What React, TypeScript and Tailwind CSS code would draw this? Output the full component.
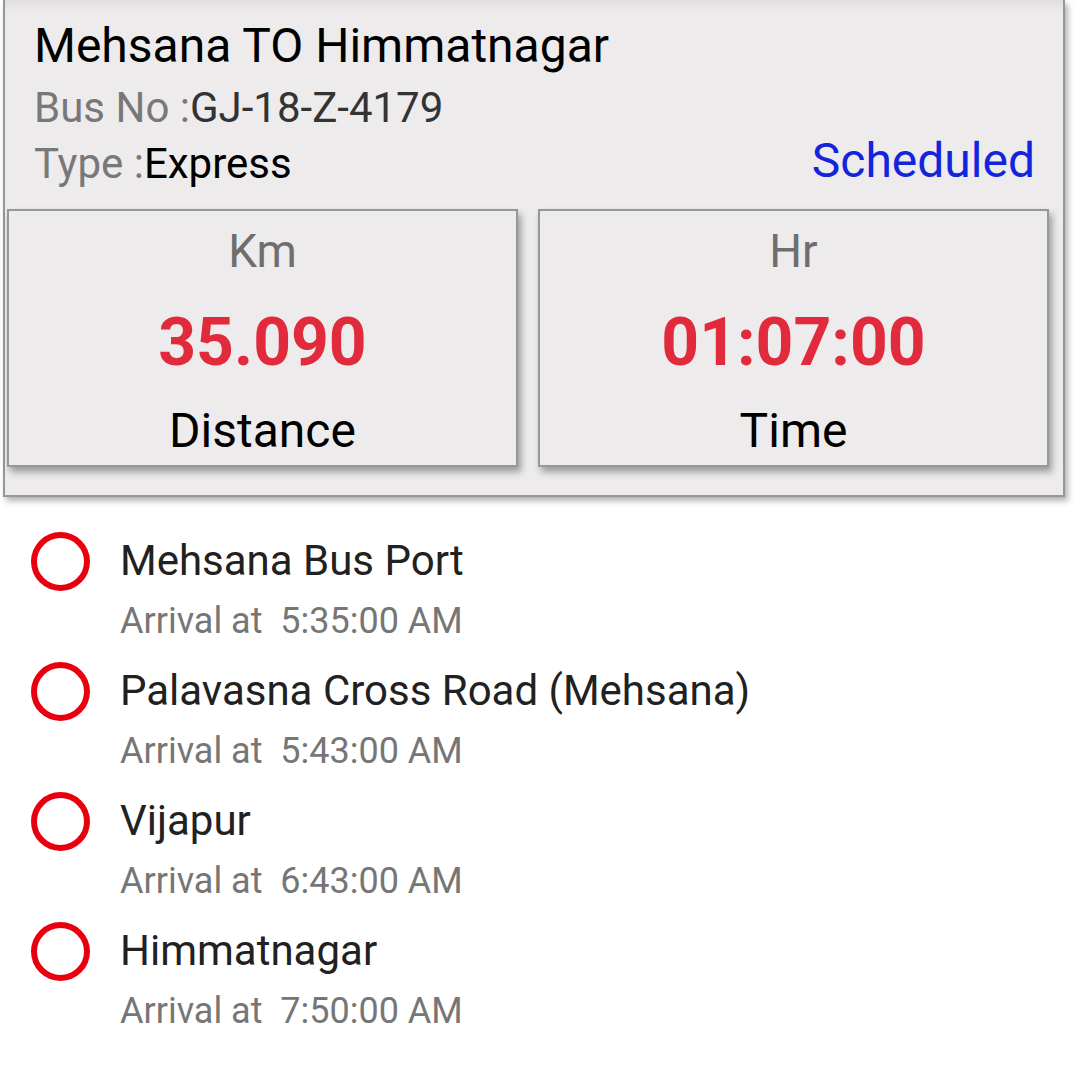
import React from "react";

const stops = [
  { name: "Mehsana Bus Port", time: "5:35:00 AM" },
  { name: "Palavasna Cross Road (Mehsana)", time: "5:43:00 AM" },
  { name: "Vijapur", time: "6:43:00 AM" },
  { name: "Himmatnagar", time: "7:50:00 AM" },
];

function StatBox({ unit, value, label }: { unit: string; value: string; label: string }) {
  return (
    <div className="w-[511px] h-[258px] box-border border-2 border-[#979797] bg-[#edebec] shadow-[3px_5px_7px_rgba(0,0,0,0.35)] flex flex-col items-center">
      <div className="mt-[12px] text-[46px] leading-[56px] text-[#6e6e6e]">{unit}</div>
      <div className="mt-[25px] text-[66px] leading-[78px] font-bold text-[#e12a3b]">{value}</div>
      <div className="mt-[21px] text-[48px] leading-[56px] text-black">{label}</div>
    </div>
  );
}

export default function App() {
  return (
    <div
      className="w-[1080px] h-[1092px] bg-white overflow-hidden"
      style={{ fontFamily: "Roboto, 'Noto Sans', sans-serif" }}
    >
      <div className="ml-[3px] w-[1062px] box-border border-l-2 border-r-2 border-b-2 border-[#979797] bg-[#edebec] shadow-[3px_4px_6px_rgba(0,0,0,0.3)] pb-[28px] relative">
        <div className="absolute left-0 right-0 top-0 h-[12px] bg-gradient-to-b from-[rgba(0,0,0,0.06)] to-transparent pointer-events-none" />
        <div className="pl-[29px] pr-[28px] pt-[18px]">
          <div className="text-[48px] leading-[56px] text-black">Mehsana TO Himmatnagar</div>
          <div className="mt-[6px] text-[42px] leading-[56px]">
            <span className="text-[#787878]">Bus No :</span>
            <span className="text-[#333333]">GJ-18-Z-4179</span>
          </div>
          <div className="flex justify-between items-start">
            <div className="text-[42px] leading-[56px]">
              <span className="text-[#787878]">Type :</span>
              <span className="text-black">Express</span>
            </div>
            <div className="text-[48px] leading-[50px] text-[#1424dc]">Scheduled</div>
          </div>
        </div>
        <div className="mt-[17px] ml-[2px] flex gap-[20px]">
          <StatBox unit="Km" value="35.090" label="Distance" />
          <StatBox unit="Hr" value="01:07:00" label="Time" />
        </div>
      </div>

      <div className="pt-[39px]">
        {stops.map((s) => (
          <div key={s.name} className="pb-[23px]">
            <div className="flex items-center h-[50px]">
              <div className="ml-[31px] w-[59px] h-[59px] shrink-0 rounded-full border-[6px] border-[#e8000f] box-border" />
              <span className="ml-[30px] text-[42px] leading-[50px] text-[#212121]">{s.name}</span>
            </div>
            <div className="mt-[13px] pl-[120px] text-[36px] leading-[44px] text-[#767676] whitespace-pre">
              {"Arrival at  " + s.time}
            </div>
          </div>
        ))}
      </div>
    </div>
  );
}
